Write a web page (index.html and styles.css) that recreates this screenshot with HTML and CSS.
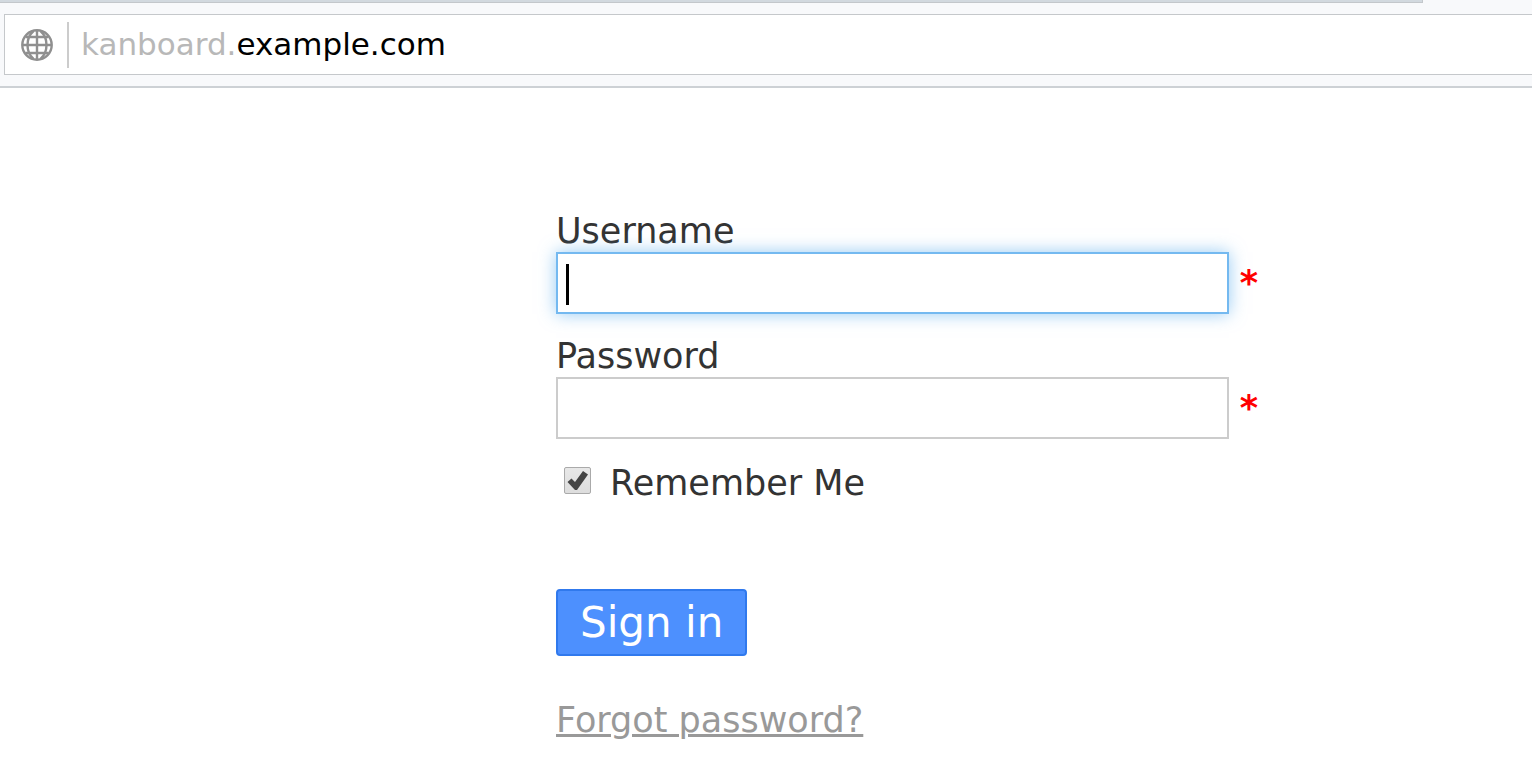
FILE: index.html
```
<!DOCTYPE html>
<html lang="en">
<head>
  <meta charset="UTF-8">
  <title>Login</title>
  <link rel="stylesheet" href="styles.css">
</head>
<body>

<header class="toolbar">
  <div class="tab-strip"></div>
  <div class="url-bar">
    <svg class="globe" viewBox="0 0 32 32" fill="none" stroke="#8f8f8f" stroke-width="2.4" aria-hidden="true">
      <circle cx="16" cy="16" r="14.7"/>
      <path d="M16 1v30M1 16h30M4.500 8h23M4.500 24h23"/>
      <path d="M12.500 2C4.500 9 4.500 23 12.500 30M19.500 2C27.500 9 27.500 23 19.500 30"/>
    </svg>
    <div class="url"><span class="subdomain">kanboard.</span>example.com</div>
  </div>
</header>

<main class="page">
  <form class="form-login">
    <label for="username">Username</label>
    <div class="field">
      <input type="text" id="username" class="active" name="username" required>
      <span class="caret"></span>
      <span class="required">*</span>
    </div>

    <label for="password">Password</label>
    <div class="field">
      <input type="password" id="password" name="password" required>
      <span class="required">*</span>
    </div>

    <div class="remember">
      <span class="check">
        <input type="checkbox" id="remember" name="remember_me" checked>
        <svg class="tick" viewBox="0 0 27 27" aria-hidden="true">
          <path d="M3.500 15L7.500 11.500L11 15L19 4L24 7.500L13 23H11Z" fill="#444"/>
        </svg>
      </span>
      <label for="remember">Remember Me</label>
    </div>

    <button type="submit" class="btn">Sign in</button>

    <a class="forgot" href="#">Forgot password?</a>
  </form>
</main>

</body>
</html>
```
FILE: styles.css
```
* {
  box-sizing: border-box;
}
body {
  margin: 0;
  background: #fff;
  color: #333;
  font-family: "DejaVu Sans", sans-serif;
  font-size: 35px;
  line-height: 41px;
}

/* browser toolbar */
.toolbar {
  padding: 0 0 11px 4px;
  background: #f8f9fb;
  border-bottom: 2px solid #cdd1d5;
}
.tab-strip {
  height: 3px;
  margin: 0 109px 11px -4px;
  background: #d2d9df;
  border-right: 1px solid #c3c7cb;
  border-bottom: 1px solid #c3c7cb;
}
.url-bar {
  display: flex;
  align-items: center;
  height: 61px;
  padding-left: 16px;
  background: #fff;
  border: 1px solid #c5c8cb;
  border-right: 0;
}
.globe {
  width: 32px;
  height: 32px;
}
.url {
  margin-left: 14px;
  padding: 0 0 2px 12px;
  border-left: 2px solid #ccc;
  color: #000;
  font-size: 31px;
  line-height: 44px;
}
.subdomain {
  color: #b8b8b8;
}

/* login form */
.page {
  display: flex;
  justify-content: center;
  padding: 123px 0 16px 282px;
}
.form-login {
  width: 702px;
}
.form-login label {
  display: block;
}
.field {
  position: relative;
  display: flex;
  align-items: center;
  gap: 11px;
  margin-bottom: 22px;
}
.field input {
  flex: 1;
  min-width: 0;
  height: 62px;
  padding: 0 8px;
  border: 2px solid #ccc;
  background: #fff;
  font: inherit;
  outline: 0;
}
.field input.active {
  border-color: #74b9f0;
  box-shadow: 0 0 16px rgba(82, 168, 236, 0.6);
}
.caret {
  position: absolute;
  top: 12px;
  left: 10px;
  width: 3px;
  height: 41px;
  background: #000;
}
.required {
  color: #f00;
  font-weight: bold;
}
.remember {
  display: flex;
  gap: 19px;
  margin: 24px 0 85px;
  padding-left: 8px;
}
.check {
  position: relative;
  width: 27px;
  height: 27px;
  margin-top: 4px;
}
.check input {
  display: block;
  width: 27px;
  height: 27px;
  margin: 0;
  appearance: none;
  border: 1px solid #aaa;
  border-radius: 2px;
  background: linear-gradient(#e8e8e8, #ddd);
}
.tick {
  position: absolute;
  top: 0;
  left: 0;
  width: 27px;
  height: 27px;
  pointer-events: none;
}
.btn {
  display: block;
  margin-bottom: 44px;
  padding: 7px 22px;
  border: 2px solid #3079ed;
  border-radius: 4px;
  background: #4d90fe;
  color: #fff;
  font-family: inherit;
  font-size: 42px;
  line-height: 49px;
}
.forgot {
  color: #999;
  text-decoration-thickness: 3px;
}
```
